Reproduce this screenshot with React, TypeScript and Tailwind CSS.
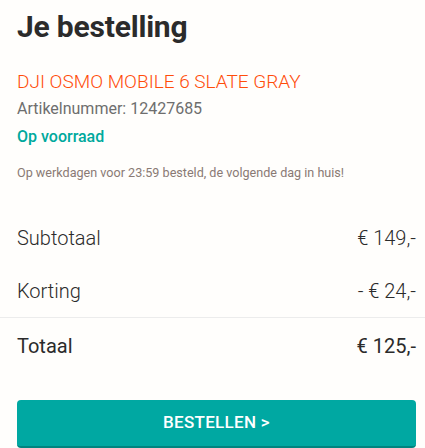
export default function App() {
  return (
    <div className="min-h-[448px] bg-[#fffefc] font-['Roboto',sans-serif] text-[#2b2b2b]">
      <div className="pl-[17px] pr-[9px] pt-[7px]">
        <h1 className="text-[30px] font-bold leading-[40px] tracking-[-0.2px]">Je bestelling</h1>
        <div className="mt-[23px] text-[19px] leading-[24px] font-light text-[#ff4d0a]">
          DJI OSMO MOBILE 6 SLATE GRAY
        </div>
        <div className="mt-[4px] text-[16px] leading-[22px] text-[#6e6e6e]">Artikelnummer: 12427685</div>
        <div className="mt-[6px] text-[16px] leading-[22px] font-medium text-[#00a99d]">Op voorraad</div>
        <div className="mt-[17px] text-[12.6px] leading-[16px] text-[#8a7a74]">
          Op werkdagen voor 23:59 besteld, de volgende dag in huis!
        </div>
      </div>
      <div className="mt-[30px] pl-[17px] pr-[9px]">
        <div className="flex items-center justify-between h-[54px] text-[20px] font-light">
          <span>Subtotaal</span>
          <span>€ 149,-</span>
        </div>
        <div className="flex items-center justify-between h-[52px] text-[20px] font-light">
          <span>Korting</span>
          <span>- € 24,-</span>
        </div>
      </div>
      <div className="border-t border-[#ececec] pl-[17px] pr-[9px]">
        <div className="flex items-center justify-between h-[56px] text-[20px] font-normal">
          <span>Totaal</span>
          <span>€ 125,-</span>
        </div>
        <button className="mt-[26px] w-full h-[48px] rounded-[4px] bg-[#00a8a2] border-b-2 border-[#00847f] text-white text-[17px] font-medium tracking-[0.3px]">
          BESTELLEN &gt;
        </button>
      </div>
    </div>
  );
}
